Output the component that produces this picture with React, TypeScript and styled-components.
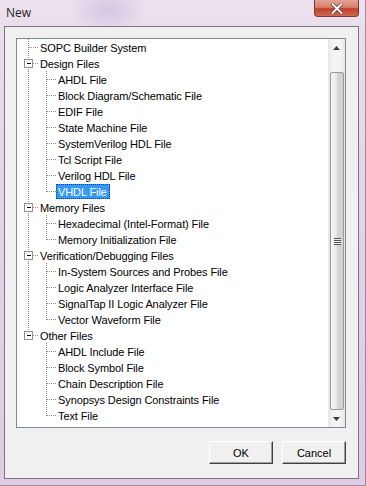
import React from "react";
import styled, { createGlobalStyle } from "styled-components";

const Global = createGlobalStyle`
  html, body { margin: 0; padding: 0; }
  body { width: 366px; height: 486px; overflow: hidden; background: #fff; }
`;

const Window = styled.div`
  width: 366px;
  height: 486px;
  box-sizing: border-box;
  display: flex;
  flex-direction: column;
  background:
    radial-gradient(ellipse 38px 24px at 108px 10px, rgba(200,180,225,0.6), rgba(200,180,225,0) 100%),
    linear-gradient(180deg, #ebe0ec 0%, #e2d5e7 40%, #dccde3 100%);
  border-right: 1px solid #a08aab;
  border-bottom: 1px solid #a08aab;
  font-family: "Liberation Sans", Arial, sans-serif;
`;

const TitleBar = styled.div`
  height: 26px;
  flex: none;
  display: flex;
  align-items: flex-start;
  justify-content: space-between;
`;

const Title = styled.div`
  font-family: "Open Sans", "Noto Sans", sans-serif;
  font-size: 12px;
  color: #1e1e1e;
  padding: 4px 0 0 6px;
`;

const CloseButton = styled.div`
  width: 45px;
  height: 17px;
  margin-right: 6px;
  box-sizing: border-box;
  border: 1px solid #7a3b3b;
  border-top: none;
  border-radius: 0 0 4px 4px;
  background: linear-gradient(180deg, #e3a392 0%, #d7826f 45%, #c0402a 55%, #cf6a4e 100%);
  display: flex;
  align-items: center;
  justify-content: center;
`;

const Client = styled.div`
  flex: 1;
  margin: 0 6px 6px 4px;
  background: #f0f0f0;
  border: 1px solid #7d7384;
  display: flex;
  flex-direction: column;
  padding: 11px 12px 0 11px;
`;

const TreeBox = styled.div`
  height: 390px;
  box-sizing: border-box;
  border: 1px solid #828790;
  background: #fff;
  display: flex;
`;

const TreeList = styled.div`
  flex: 1;
  display: flex;
  flex-direction: column;
`;

const Row = styled.div<{ $hideRoot?: boolean }>`
  height: 16px;
  display: flex;
  align-items: center;
  flex: none;
  --rootline: ${(p) => (p.$hideRoot ? "none" : "inline")};
`;

const Label = styled.span<{ $selected?: boolean }>`
  font-size: 11px;
  line-height: 14px;
  height: 15px;
  box-sizing: border-box;
  padding: 0 2px 0 1px;
  color: ${(p) => (p.$selected ? "#fff" : "#000")};
  background: ${(p) => (p.$selected ? "#3399ff" : "transparent")};
  border: 1px ${(p) => (p.$selected ? "dotted #0b3e86" : "solid transparent")};
  white-space: nowrap;
  letter-spacing: -0.1px;
`;

const ScrollBar = styled.div`
  width: 17px;
  flex: none;
  display: flex;
  flex-direction: column;
  background: linear-gradient(90deg, #e6e6e6, #f4f4f4 30%, #f4f4f4 70%, #e6e6e6);
`;

const ArrowBtn = styled.div`
  height: 17px;
  flex: none;
  display: flex;
  align-items: center;
  justify-content: center;
`;

const Track = styled.div`
  flex: 1;
  display: flex;
  flex-direction: column;
  padding: 16px 1px 0 2px;
`;

const Thumb = styled.div`
  flex: 1;
  box-sizing: border-box;
  border: 1px solid #9a9a9a;
  border-radius: 2px;
  background: linear-gradient(90deg, #f6f6f6 0%, #e8e8e8 45%, #d6d6d6 55%, #cfcfcf 100%);
  display: flex;
  align-items: center;
  justify-content: center;
`;

const Grip = styled.div`
  width: 7px;
  height: 7px;
  background: repeating-linear-gradient(180deg, #555 0 1px, #eee 1px 2px);
`;

const ButtonRow = styled.div`
  display: flex;
  justify-content: flex-end;
  gap: 9px;
  padding-top: 13px;
`;

const Button = styled.div`
  width: 64px;
  height: 23px;
  box-sizing: border-box;
  background: #f0f0f0;
  border: 1px solid;
  border-color: #ffffff #404040 #404040 #ffffff;
  box-shadow: inset -1px -1px 0 #a0a0a0;
  font-size: 11px;
  display: flex;
  align-items: center;
  justify-content: center;
  color: #000;
`;

type Item = { label: string; level: 0 | 1; expander?: boolean; lastRoot?: boolean; lastChild?: boolean; selected?: boolean };

const items: Item[] = [
  { label: "SOPC Builder System", level: 0 },
  { label: "Design Files", level: 0, expander: true },
  { label: "AHDL File", level: 1 },
  { label: "Block Diagram/Schematic File", level: 1 },
  { label: "EDIF File", level: 1 },
  { label: "State Machine File", level: 1 },
  { label: "SystemVerilog HDL File", level: 1 },
  { label: "Tcl Script File", level: 1 },
  { label: "Verilog HDL File", level: 1 },
  { label: "VHDL File", level: 1, lastChild: true, selected: true },
  { label: "Memory Files", level: 0, expander: true },
  { label: "Hexadecimal (Intel-Format) File", level: 1 },
  { label: "Memory Initialization File", level: 1, lastChild: true },
  { label: "Verification/Debugging Files", level: 0, expander: true },
  { label: "In-System Sources and Probes File", level: 1 },
  { label: "Logic Analyzer Interface File", level: 1 },
  { label: "SignalTap II Logic Analyzer File", level: 1 },
  { label: "Vector Waveform File", level: 1, lastChild: true },
  { label: "Other Files", level: 0, expander: true, lastRoot: true },
  { label: "AHDL Include File", level: 1 },
  { label: "Block Symbol File", level: 1 },
  { label: "Chain Description File", level: 1 },
  { label: "Synopsys Design Constraints File", level: 1 },
  { label: "Text File", level: 1, lastChild: true },
];

const DOT = { stroke: "#8c8c8c", strokeWidth: 1, strokeDasharray: "1 1", shapeRendering: "crispEdges" as const };

function Lines({ item }: { item: Item }) {
  const w = item.level === 0 ? 21 : 39;
  const rootX = 11.5;
  const childX = 29.5;
  const mid = 8.5;
  return (
    <svg width={w} height={16} style={{ flex: "none" }}>
      {item.level === 0 ? (
        <>
          <line x1={rootX} y1={0} x2={rootX} y2={item.lastRoot ? mid : 16} {...DOT} />
          {item.expander ? (
            <>
              <line x1={16} y1={mid} x2={21} y2={mid} {...DOT} />
              <rect x={7.5} y={4.5} width={8} height={8} fill="#fff" stroke="#919191" shapeRendering="crispEdges" />
              <line x1={9.5} y1={mid} x2={14} y2={mid} stroke="#000" shapeRendering="crispEdges" />
            </>
          ) : (
            <line x1={rootX} y1={mid} x2={21} y2={mid} {...DOT} />
          )}
        </>
      ) : (
        <>
          <line x1={rootX} y1={0} x2={rootX} y2={16} {...DOT} style={{ display: "var(--rootline)" }} />
          <line x1={childX} y1={0} x2={childX} y2={item.lastChild ? mid : 16} {...DOT} />
          <line x1={childX} y1={mid} x2={39} y2={mid} {...DOT} />
        </>
      )}
    </svg>
  );
}

export default function App() {
  let afterLastRoot = false;
  return (
    <>
      <Global />
      <Window>
        <TitleBar>
          <Title>New</Title>
          <CloseButton>
            <svg width="12" height="11" viewBox="0 0 12 11">
              <path d="M1.5 1 L10.5 10 M10.5 1 L1.5 10" stroke="#5a2a2a" strokeWidth="3.4" strokeLinecap="round" />
              <path d="M1.5 1 L10.5 10 M10.5 1 L1.5 10" stroke="#fff" strokeWidth="2" strokeLinecap="round" />
            </svg>
          </CloseButton>
        </TitleBar>
        <Client>
          <TreeBox>
            <TreeList>
              {items.map((it, i) => {
                if (it.lastRoot) afterLastRoot = true;
                const hideRoot = afterLastRoot && it.level === 1;
                return (
                  <Row key={i} $hideRoot={hideRoot}>
                    <Lines item={it} />
                    <Label $selected={it.selected}>{it.label}</Label>
                  </Row>
                );
              })}
            </TreeList>
            <ScrollBar>
              <ArrowBtn>
                <svg width="7" height="4" viewBox="0 0 7 4"><path d="M0 4 L3.5 0 L7 4 Z" fill="#3a3a3a" /></svg>
              </ArrowBtn>
              <Track>
                <Thumb><Grip /></Thumb>
              </Track>
              <ArrowBtn>
                <svg width="7" height="4" viewBox="0 0 7 4"><path d="M0 0 L3.5 4 L7 0 Z" fill="#3a3a3a" /></svg>
              </ArrowBtn>
            </ScrollBar>
          </TreeBox>
          <ButtonRow>
            <Button>OK</Button>
            <Button>Cancel</Button>
          </ButtonRow>
        </Client>
      </Window>
    </>
  );
}
